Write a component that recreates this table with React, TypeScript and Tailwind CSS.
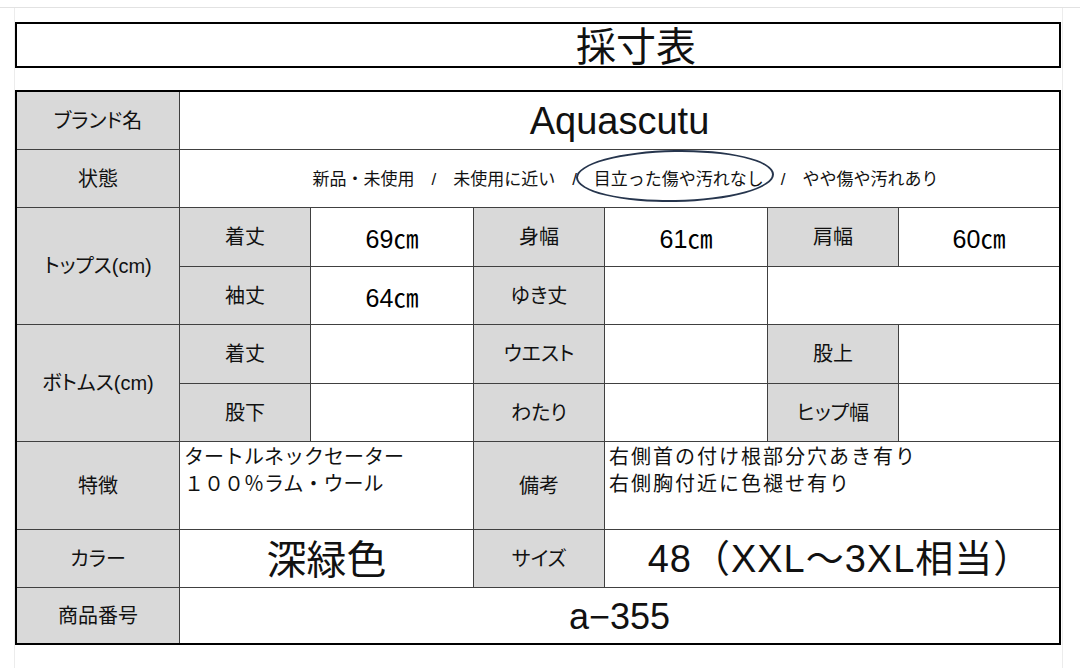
import React from 'react';

const FONT = "font-['Liberation_Sans','Noto_Sans_CJK_JP',sans-serif]";

const Label: React.FC<{ children?: React.ReactNode; className?: string }> = ({ children, className = '' }) => (
  <div className={`bg-[#d9d9d9] flex items-center justify-center text-[20px] text-[#111] [font-feature-settings:'palt'] ${className}`}>
    {children}
  </div>
);

const Cell: React.FC<{ children?: React.ReactNode; className?: string }> = ({ children, className = '' }) => (
  <div className={`bg-white flex items-center justify-center text-[#111] ${className}`}>{children}</div>
);

const Size: React.FC<{ v: string }> = ({ v }) => <span className="text-[25px] pt-[6px] text-black">{v}</span>;

const App: React.FC = () => {
  return (
    <div className={`w-[1080px] h-[668px] bg-white pt-[7px] overflow-hidden ${FONT}`}>
      <div className="h-full border-t border-[#e2e2e2]">
        <div className="ml-[14px] w-[1049px] h-full border-l border-r border-[#ececec] pt-[14px]">
          {/* title */}
          <div className="w-[1046px] h-[46px] border-2 border-black flex items-start justify-center pl-[196px] pt-[3px]">
            <span className="text-[40px] leading-[40px] text-[#111]">採寸表</span>
          </div>

          {/* sheet */}
          <div className="mt-[22px] w-[1046px] border-2 border-black bg-[#404040] grid gap-px grid-cols-[162px_130px_162px_130px_162px_130px_160px] grid-rows-[57px_57px_58px_57px_58px_57px_87px_57px_55px]">
            <Label>ブランド名</Label>
            <Cell className="col-span-6 text-[38px] pt-[2px]">Aquascutu</Cell>

            <Label>状態</Label>
            <Cell className="col-span-6 text-[17px] pt-[2px] pl-[12px]">
              <span>新品・未使用　/　未使用に近い　/　</span>
              <span className="relative inline-block">
                目立った傷や汚れなし
                <span className="absolute left-[-18px] right-[-10px] top-[calc(50%-4px)] -translate-y-1/2 h-[52px] rounded-[50%] border-2 border-[#26354d] -rotate-1" />
              </span>
              <span>　/　やや傷や汚れあり</span>
            </Cell>

            <Label className="row-span-2">トップス(cm)</Label>
            <Label>着丈</Label>
            <Cell><Size v="69㎝" /></Cell>
            <Label>身幅</Label>
            <Cell><Size v="61㎝" /></Cell>
            <Label>肩幅</Label>
            <Cell><Size v="60㎝" /></Cell>

            <Label>袖丈</Label>
            <Cell><Size v="64㎝" /></Cell>
            <Label>ゆき丈</Label>
            <Cell />
            <Cell className="col-span-2" />

            <Label className="row-span-2">ボトムス(cm)</Label>
            <Label>着丈</Label>
            <Cell />
            <Label>ウエスト</Label>
            <Cell />
            <Label>股上</Label>
            <Cell />

            <Label>股下</Label>
            <Cell />
            <Label>わたり</Label>
            <Cell />
            <Label>ヒップ幅</Label>
            <Cell />

            <Label>特徴</Label>
            <div className="col-span-2 bg-white text-[20px] leading-[27px] text-[#111] pl-[4px] pt-[2px]">
              <div>タートルネックセーター</div>
              <div>１００％ラム・ウール</div>
            </div>
            <Label>備考</Label>
            <div className="col-span-3 bg-white text-[20px] leading-[27px] text-[#111] pl-[4px] pt-[2px] tracking-[2px]">
              <div>右側首の付け根部分穴あき有り</div>
              <div>右側胸付近に色褪せ有り</div>
            </div>

            <Label>カラー</Label>
            <Cell className="col-span-2 text-[40px] pt-[2px]">深緑色</Cell>
            <Label className="text-[18px]">サイズ</Label>
            <Cell className="col-span-3 text-[38px] pt-[2px] pl-[16px] tracking-[1px]">48（XXL～3XL相当）</Cell>

            <Label>商品番号</Label>
            <Cell className="col-span-6 text-[36px] pt-[2px]">a−355</Cell>
          </div>
        </div>
      </div>
    </div>
  );
};

export default App;
